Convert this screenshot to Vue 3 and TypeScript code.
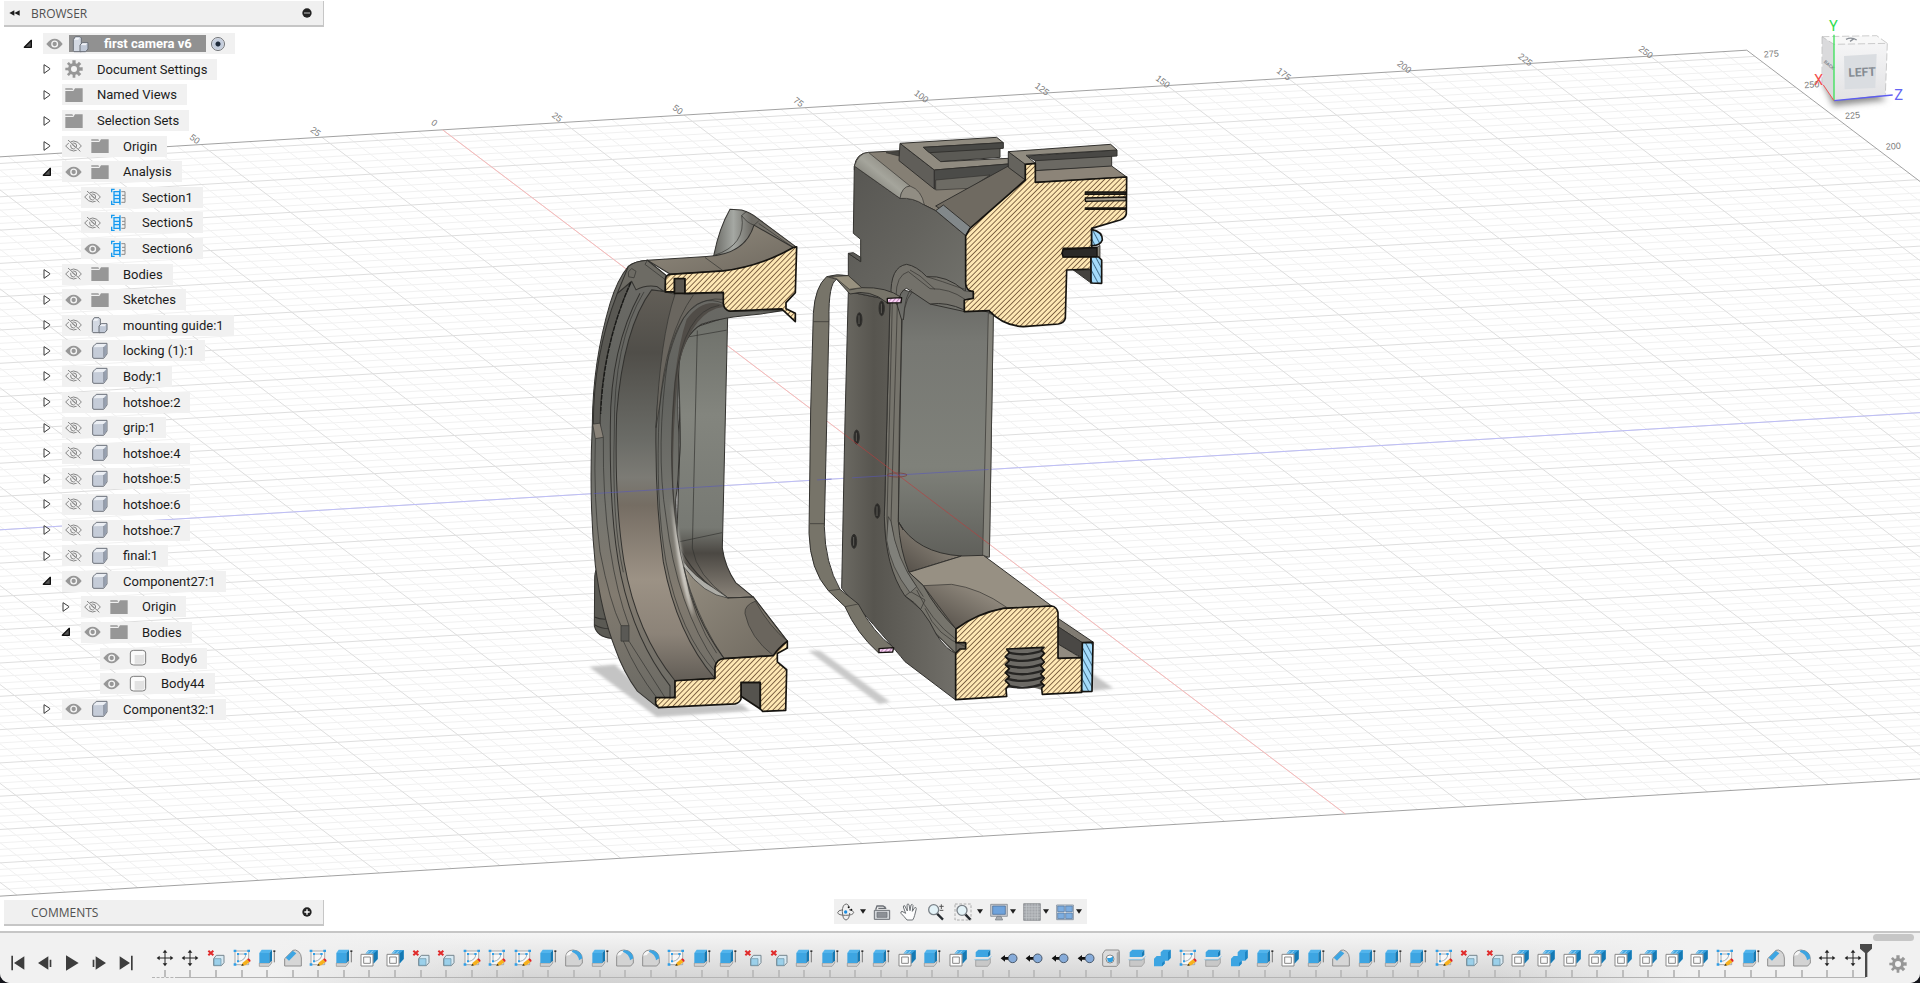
<script setup lang="ts">
import { ref } from 'vue'

type NodeIcon = 'assembly' | 'gear' | 'folder' | 'section' | 'cube' | 'body'

interface TreeNode {
  label: string
  icon: NodeIcon
  level: number
  arrow: 'open' | 'closed' | 'none'
  eye: 'on' | 'off' | 'none'
  root?: boolean
}

const node = (
  label: string,
  icon: NodeIcon,
  level: number,
  arrow: TreeNode['arrow'],
  eye: TreeNode['eye'],
  root = false
): TreeNode => ({ label, icon, level, arrow, eye, root })

const nodes = ref<TreeNode[]>([
  node('first camera v6', 'assembly', 0, 'open', 'on', true),
  node('Document Settings', 'gear', 1, 'closed', 'none'),
  node('Named Views', 'folder', 1, 'closed', 'none'),
  node('Selection Sets', 'folder', 1, 'closed', 'none'),
  node('Origin', 'folder', 1, 'closed', 'off'),
  node('Analysis', 'folder', 1, 'open', 'on'),
  node('Section1', 'section', 2, 'none', 'off'),
  node('Section5', 'section', 2, 'none', 'off'),
  node('Section6', 'section', 2, 'none', 'on'),
  node('Bodies', 'folder', 1, 'closed', 'off'),
  node('Sketches', 'folder', 1, 'closed', 'on'),
  node('mounting guide:1', 'assembly', 1, 'closed', 'off'),
  node('locking (1):1', 'cube', 1, 'closed', 'on'),
  node('Body:1', 'cube', 1, 'closed', 'off'),
  node('hotshoe:2', 'cube', 1, 'closed', 'off'),
  node('grip:1', 'cube', 1, 'closed', 'off'),
  node('hotshoe:4', 'cube', 1, 'closed', 'off'),
  node('hotshoe:5', 'cube', 1, 'closed', 'off'),
  node('hotshoe:6', 'cube', 1, 'closed', 'off'),
  node('hotshoe:7', 'cube', 1, 'closed', 'off'),
  node('final:1', 'cube', 1, 'closed', 'off'),
  node('Component27:1', 'cube', 1, 'open', 'on'),
  node('Origin', 'folder', 2, 'closed', 'off'),
  node('Bodies', 'folder', 2, 'open', 'on'),
  node('Body6', 'body', 3, 'none', 'on'),
  node('Body44', 'body', 3, 'none', 'on'),
  node('Component32:1', 'cube', 1, 'closed', 'on')
])

const toggleEye = (n: TreeNode): void => {
  n.eye = n.eye === 'on' ? 'off' : 'on'
}

const features: string[] = (
  'move move del sketch ext chamfer sketch ext shell shell del del sketch sketch sketch ext fillet ext ' +
  'fillet fillet sketch ext ext del del ext ext ext ext shell ext shell split press press press press hole ' +
  'split combine sketch split combine ext shell ext chamfer ext ext ext sketch del del shell shell shell ' +
  'shell shell shell shell shell sketch ext chamfer fillet move move'
).split(' ')

const transport = [
  { id: 'first', label: 'Go to beginning' },
  { id: 'prev', label: 'Step back' },
  { id: 'play', label: 'Play' },
  { id: 'next', label: 'Step forward' },
  { id: 'last', label: 'Go to end' }
]

const tools = [
  { id: 'orbit', label: 'Orbit', menu: true, kind: 'loose' },
  { id: 'lookat', label: 'Look at', menu: false, kind: 'single' },
  { id: 'pan', label: 'Pan', menu: false, kind: 'single' },
  { id: 'zoom', label: 'Zoom', menu: false, kind: 'single' },
  { id: 'zoomwin', label: 'Zoom window', menu: true, kind: 'loose' },
  { id: 'display', label: 'Display settings', menu: true, kind: 'tight' },
  { id: 'gridset', label: 'Grid and snaps', menu: true, kind: 'tight' },
  { id: 'viewports', label: 'Viewports', menu: true, kind: 'tight' }
]

/* Ground plane: x runs along the red axis, z along the blue one, one unit is 25 mm. */
const project = (x: number, z: number): [number, number] => [
  Math.round((898 + 40.66 * x + 120.76 * z) * 10) / 10,
  Math.round((475 + 30.82 * x - 7.37 * z) * 10) / 10
]
const segment = (x1: number, z1: number, x2: number, z2: number): string => {
  const a = project(x1, z1)
  const b = project(x2, z2)
  return `M${a[0]} ${a[1]}L${b[0]} ${b[1]}`
}
const X0 = -11.2
const X1 = 11
const Z0 = -15
const Z1 = 10.8

let minor = ''
let major = ''
for (let i = -55; i <= 54; i++) {
  const d = segment(i / 5, Z0, i / 5, Z1)
  if (i % 5 === 0) major += d
  else minor += d
}
for (let i = -75; i <= 53; i++) {
  const d = segment(X0, i / 5, X1, i / 5)
  if (i % 5 === 0) major += d
  else minor += d
}
const border = segment(X0, Z0, X0, Z1) + segment(X1, Z0, X1, Z1) + segment(X0, Z1, X1, Z1)
const axisX = segment(X0, 0, X1, 0)
const axisZ = segment(0, Z0, 0, Z1)
const overRing = segment(0, -2.52, 0, -1.45)
const overBand = segment(0, -0.67, 0, -0.55)
const overBody = segment(0, -0.38, 0, 0.75)
const overBodyX = segment(-1.3, 0, 2.25, 0)

const topLabels = Array.from({ length: 13 }, (_, i) => i - 2).map((z) => {
  const p = project(X0 - 0.1, z)
  return { text: String(Math.abs(z * 25)), t: `translate(${p[0] - 8} ${p[1] - 3}) rotate(37)` }
})
const sideLabels = [275, 250, 225, 200].map((v) => {
  const p = project(-v / 25, Z1)
  return { text: String(v), t: `translate(${p[0] + 9} ${p[1] + 1}) rotate(-4)` }
})
const threads = [0, 1, 2, 3, 4, 5]
</script>

<template>
  <div class="app">
    <svg class="defs" aria-hidden="true">
      <defs>
        <symbol id="i-eye-on" viewBox="0 0 51 36">
          <path d="M1 18Q13 2 26 2T50 18Q38 34 26 34T1 18Z" fill="#979797" />
          <circle cx="26" cy="18" r="8.500" fill="#979797" stroke="#f4f4f4" stroke-width="4" />
        </symbol>
        <symbol id="i-eye-off" viewBox="0 0 51 36">
          <path d="M2 18Q13 3 26 3T49 18Q38 33 26 33T2 18Z" fill="none" stroke="#858585" stroke-width="3" />
          <circle cx="26" cy="18" r="9" fill="none" stroke="#858585" stroke-width="3" />
          <path d="M8 1L44 34" stroke="#f1f1f1" stroke-width="7" />
          <path d="M9 0L46 34M20 12L32 23" stroke="#858585" stroke-width="3" />
        </symbol>
        <symbol id="i-folder" viewBox="0 0 54 54">
          <path d="M1 7H22L25 11H1Z" fill="#979797" />
          <path d="M1 15H25L30 7H53V48H1Z" fill="#979797" />
        </symbol>
        <symbol id="i-gear" viewBox="0 0 54 54">
          <g fill="#979797">
            <path v-for="a in [0, 45, 90, 135]" :key="a" d="M22 1H32L31 53H23Z" :transform="`rotate(${a} 27 27)`" />
            <circle cx="27" cy="27" r="18" />
          </g>
          <circle cx="27" cy="27" r="9" fill="#f4f4f4" />
        </symbol>
        <symbol id="i-cube" viewBox="0 0 54 54">
          <path d="M5 18Q5 13 9 11L16 4H48V36L38 49H9Q5 49 5 45Z" fill="#c5ccd8" stroke="#70757d" stroke-width="3" stroke-linejoin="round" />
          <path d="M7 16L17 6H46L37 15Z" fill="#eceff4" />
          <path d="M38 16L47 7V36L38 46Z" fill="#98a1b0" />
          <path d="M38 15V46" stroke="#7d8490" stroke-width="2" />
        </symbol>
        <symbol id="i-assembly" viewBox="0 0 54 54">
          <path d="M4 14L10 5H24L28 9V50H6L4 47Z" fill="#d3d9e3" stroke="#6b7078" stroke-width="3" stroke-linejoin="round" />
          <path d="M24 30L31 23H48V42L41 50H24Z" fill="#c0c8d6" stroke="#6b7078" stroke-width="3" stroke-linejoin="round" />
          <path d="M26 30L32 25H46L41 31Z" fill="#f0f2f6" />
          <path d="M7 14L11 8H22L19 14Z" fill="#f3f5f9" />
        </symbol>
        <symbol id="i-body" viewBox="0 0 54 54">
          <path d="M4 12Q4 4 14 4H40Q50 4 50 12V40Q50 48 40 48H14Q4 48 4 40Z" fill="#fbfbfb" stroke="#7c7c7c" stroke-width="3" />
          <path d="M17 18H40Q46 18 46 13V40Q46 44 40 44H17Z" fill="#e2e2e2" />
        </symbol>
        <symbol id="i-section" viewBox="0 0 54 54">
          <path d="M14 4H5V13M5 38V49H14" fill="none" stroke="#169af0" stroke-width="4" />
          <path d="M12 11H29V43H12ZM12 22H29M12 32H29M30 4V50" fill="#d4ecfc" stroke="#169af0" stroke-width="4" />
          <path d="M34 11H45V22H36M45 22V32H36M45 32V43H34" fill="none" stroke="#8a8a8a" stroke-width="3" />
        </symbol>

        <symbol id="f-move" viewBox="0 0 54 54">
          <path d="M27 8V46M8 27H46" stroke="#222" stroke-width="3" />
          <path d="M27 2L34 11H20ZM27 52L34 43H20ZM2 27L11 20V34ZM52 27L43 20V34Z" fill="#222" />
        </symbol>
        <symbol id="f-ext" viewBox="0 0 54 54">
          <path d="M4 42H33L41 34V42L33 52H4Z" fill="#d2d2d2" stroke="#8d8d8d" stroke-width="2" />
          <path d="M4 12L11 2H42L34 12Z" fill="#52b4ec" />
          <path d="M4 12H34V42H4Z" fill="#3da5e2" />
          <path d="M34 12L42 2V34L34 42Z" fill="#1579b3" />
          <path d="M49 7V40" stroke="#444" stroke-width="2" />
          <path d="M46 4H52V9H46Z" fill="#333" />
        </symbol>
        <symbol id="f-sketch" viewBox="0 0 54 54">
          <path d="M6 6H47V47H6Z" fill="#f7f7f7" stroke="#8a8a8a" stroke-width="2" />
          <path d="M15 38V15H38M38 15Q39 33 15 38" fill="none" stroke="#7c8994" stroke-width="2" />
          <path d="M2 2H10V9H2ZM43 2H51V9H43ZM2 43H10V50H2ZM12 12H18V18H12ZM34 12H41V18H34ZM12 34H18V40H12Z" fill="#2f9fe8" />
          <path d="M25 51L29 41L42 31L50 39L37 49Z" fill="#f7b11d" />
          <path d="M42 31L46 28Q53 31 53 36L50 39Z" fill="#e32424" />
          <path d="M25 51L28 44L33 49Z" fill="#333" />
        </symbol>
        <symbol id="f-chamfer" viewBox="0 0 54 54">
          <path d="M2 29L27 4Q34 0 44 8Q52 16 52 27V51H2Z" fill="#d6d6d6" stroke="#8f8f8f" stroke-width="3" />
          <path d="M5 26L26 5L37 13L15 35Z" fill="#3da5e2" />
        </symbol>
        <symbol id="f-fillet" viewBox="0 0 54 54">
          <path d="M2 51V23Q4 4 24 3Q52 5 52 32V42L44 51Z" fill="#d3d3d3" stroke="#8f8f8f" stroke-width="3" />
          <path d="M3 20Q8 5 24 5L34 9Q18 8 15 18Z" fill="#f6f6f6" />
          <path d="M24 3Q50 5 52 28L42 34Q40 15 20 8Z" fill="#3da5e2" />
        </symbol>
        <symbol id="f-shell" viewBox="0 0 54 54">
          <path d="M16 14L26 3H53V30L40 44V14Z" fill="#3da5e2" />
          <path d="M40 14L53 3V30L40 44Z" fill="#1579b3" />
          <path d="M20 14L29 5M30 14L39 5" stroke="#e9f5fc" stroke-width="2" />
          <path d="M3 16H39V51H3Z" fill="#fff" stroke="#898989" stroke-width="3" />
          <path d="M11 24H31V43H11Z" fill="#fafafa" stroke="#898989" stroke-width="3" />
        </symbol>
        <symbol id="f-del" viewBox="0 0 54 54">
          <path d="M4 5L19 19M19 5L4 19" stroke="#e02a2a" stroke-width="6" />
          <path d="M20 29L28 19H51V41L43 50H20Z" fill="#d7eaf4" stroke="#77868f" stroke-width="3" stroke-linejoin="round" />
          <path d="M21 29H42V49H21Z" fill="#9bd0ea" stroke="#6b8fa2" stroke-width="2" />
        </symbol>
        <symbol id="f-split" viewBox="0 0 54 54">
          <path d="M5 33H42L49 28V42L41 52H5Z" fill="#c8c8c8" stroke="#939393" stroke-width="2" />
          <path d="M5 10L13 2H49L42 10V24H5Z" fill="#3da5e2" />
          <path d="M42 10L49 2V18L42 24Z" fill="#1579b3" />
          <path d="M1 32H42L53 22" fill="none" stroke="#6fc1f0" stroke-width="2" />
        </symbol>
        <symbol id="f-combine" viewBox="0 0 54 54">
          <path d="M3 29L11 21H23V10L31 2H53V27L45 35H35V44L27 52H3Z" fill="#3da5e2" />
          <path d="M45 10L53 2V27L45 35ZM35 35V44L27 52V42Z" fill="#1f86c4" />
        </symbol>
        <symbol id="f-press" viewBox="0 0 54 54">
          <path d="M2 28L15 18V24H26V32H15V38Z" fill="#111" />
          <circle cx="38" cy="28" r="13" fill="#86abd9" stroke="#4c5a6b" stroke-width="3" />
        </symbol>
        <symbol id="f-hole" viewBox="0 0 54 54">
          <path d="M2 14L10 3H48Q52 3 52 7V42L44 52H6Q2 52 2 48Z" fill="#dcdcdc" stroke="#8f8f8f" stroke-width="3" />
          <path d="M44 12L51 6V42L44 49Z" fill="#a9a9a9" />
          <circle cx="24" cy="30" r="12" fill="#fff" stroke="#8a8a8a" stroke-width="3" />
          <path d="M15 26Q30 30 31 21Q37 28 33 35Q26 43 17 37Z" fill="#2f9fe0" />
        </symbol>

        <symbol id="t-first" viewBox="0 0 48 48"><path d="M4 2H9V46H4ZM43 4V44L12 24Z" fill="#3d3d3d" /></symbol>
        <symbol id="t-prev" viewBox="0 0 48 48"><path d="M34 4V44L3 24ZM38 14H43V36H38Z" fill="#3d3d3d" /></symbol>
        <symbol id="t-play" viewBox="0 0 48 48"><path d="M6 1L44 24L6 47Z" fill="#3d3d3d" /></symbol>
        <symbol id="t-next" viewBox="0 0 48 48"><path d="M14 4V44L45 24ZM5 14H10V36H5Z" fill="#3d3d3d" /></symbol>
        <symbol id="t-last" viewBox="0 0 48 48"><path d="M39 2H44V46H39ZM5 4V44L36 24Z" fill="#3d3d3d" /></symbol>

        <symbol id="n-orbit" viewBox="0 0 54 54">
          <path d="M18 20Q2 22 2 29Q4 37 26 37Q49 37 50 28Q49 22 36 20" fill="none" stroke="#6f6f6f" stroke-width="3" />
          <path d="M28 3Q16 4 16 26Q17 50 27 51Q37 49 38 30M28 3Q33 3 36 11" fill="none" stroke="#6f6f6f" stroke-width="3" />
          <circle cx="26" cy="27" r="5" fill="#1b8de0" />
          <circle cx="35" cy="13" r="3" fill="#111" /><circle cx="43" cy="20" r="3" fill="#111" />
        </symbol>
        <symbol id="n-lookat" viewBox="0 0 54 54">
          <path d="M4 22H50V49H4Z" fill="#d3d6da" stroke="#6b6f75" stroke-width="3" />
          <path d="M12 28H42V43H12Z" fill="#8c9096" stroke="#6b6f75" stroke-width="2" />
          <path d="M8 20L12 9H30L38 14M16 16H40" fill="none" stroke="#6b6f75" stroke-width="4" />
        </symbol>
        <symbol id="n-pan" viewBox="0 0 54 54">
          <path d="M21 51Q13 41 3 31Q1 26 6 25L17 31L10 12Q10 7 14 8L22 24L21 5Q24 0 27 5L30 23L33 6Q37 2 39 7L37 25L44 14Q49 12 49 17L44 37Q42 45 38 51Z" fill="#fdfdfd" stroke="#6e7276" stroke-width="3" stroke-linejoin="round" />
        </symbol>
        <symbol id="n-zoom" viewBox="0 0 54 54">
          <path d="M30 32L48 50" stroke="#262b30" stroke-width="7" />
          <circle cx="20" cy="20" r="15" fill="#e4f3f8" stroke="#7b8288" stroke-width="4" />
          <path d="M43 4V18M37 10H50M38 22H49" stroke="#555" stroke-width="3" />
        </symbol>
        <symbol id="n-zoomwin" viewBox="0 0 54 54">
          <path d="M3 3H51V51H3Z" fill="none" stroke="#888" stroke-width="2" stroke-dasharray="8 5" />
          <path d="M34 34L49 50" stroke="#262b30" stroke-width="7" />
          <circle cx="24" cy="22" r="15" fill="#e4f3f8" stroke="#7b8288" stroke-width="4" />
        </symbol>
        <symbol id="n-display" viewBox="0 0 54 54">
          <path d="M2 4H52V40H2Z" fill="#c9cdd2" stroke="#737980" stroke-width="2" />
          <path d="M8 9H46V34H8Z" fill="#6fa3dc" stroke="#45678f" stroke-width="2" />
          <path d="M21 40H33L38 51H16Z" fill="#a9adb2" stroke="#737980" stroke-width="2" />
        </symbol>
        <symbol id="n-gridset" viewBox="0 0 54 54">
          <path d="M2 2H52V52H2Z" fill="#a3a6aa" stroke="#75787c" stroke-width="2" />
          <path d="M10 2V52M18 2V52M27 2V52M36 2V52M44 2V52M2 10H52M2 18H52M2 27H52M2 36H52M2 44H52" stroke="#c6c8cb" stroke-width="2" />
        </symbol>
        <symbol id="n-viewports" viewBox="0 0 54 54">
          <path d="M2 6H52V50H2Z" fill="#eee" stroke="#5d6f85" stroke-width="2" />
          <path d="M5 9H25V26H5ZM29 9H49V26H29ZM5 30H25V47H5ZM29 30H49V47H29Z" fill="#7dade0" stroke="#4b7099" stroke-width="2" />
        </symbol>
      </defs>
    </svg>

    <main class="workspace">
      <svg class="scene" viewBox="0 0 1920 931" preserveAspectRatio="xMidYMid slice" role="img" aria-label="Section view of the camera model">
        <defs>
          <pattern id="hatch" width="11" height="11" patternUnits="userSpaceOnUse" patternTransform="rotate(45)">
            <rect width="11" height="11" fill="#fee8b4" /><path d="M1 0V11" stroke="#6f5236" stroke-width="3" />
          </pattern>
          <pattern id="hatchBlue" width="15" height="15" patternUnits="userSpaceOnUse" patternTransform="rotate(-28)">
            <rect width="15" height="15" fill="#a4dbfb" /><path d="M1 0V15" stroke="#2f5b78" stroke-width="3" />
          </pattern>
          <pattern id="hatchPink" width="9" height="9" patternUnits="userSpaceOnUse" patternTransform="rotate(40)">
            <rect width="9" height="9" fill="#fbd3f6" /><path d="M1 0V9" stroke="#8a4b84" stroke-width="2" />
          </pattern>
          <linearGradient id="wall" x1="0" y1="0" x2="0" y2="1">
            <stop offset="0" stop-color="#625e57" /><stop offset=".16" stop-color="#504e49" />
            <stop offset=".38" stop-color="#6a6b66" /><stop offset=".48" stop-color="#7c7b75" />
            <stop offset=".55" stop-color="#756d63" /><stop offset=".74" stop-color="#9c9285" />
            <stop offset=".88" stop-color="#8c8378" /><stop offset="1" stop-color="#625d56" />
          </linearGradient>
          <linearGradient id="rim" x1="0" y1="0" x2="0" y2="1">
            <stop offset="0" stop-color="#6c6b66" /><stop offset=".3" stop-color="#62635f" />
            <stop offset=".55" stop-color="#75756f" /><stop offset=".75" stop-color="#827b70" /><stop offset="1" stop-color="#6a6963" />
          </linearGradient>
          <linearGradient id="pane" x1="0" y1="0" x2="0" y2="1">
            <stop offset="0" stop-color="#6e706a" /><stop offset=".35" stop-color="#83857e" />
            <stop offset=".75" stop-color="#777973" /><stop offset=".84" stop-color="#4b4843" /><stop offset="1" stop-color="#8a8379" />
          </linearGradient>
          <linearGradient id="horn" x1="0" y1="0" x2="1" y2="0">
            <stop offset="0" stop-color="#55544f" /><stop offset=".3" stop-color="#a5a8a3" />
            <stop offset=".5" stop-color="#6e6c66" /><stop offset="1" stop-color="#827c72" />
          </linearGradient>
          <linearGradient id="tan" x1="0" y1="0" x2="1" y2="1">
            <stop offset="0" stop-color="#948d80" /><stop offset="1" stop-color="#6f695f" />
          </linearGradient>
          <linearGradient id="scoop" x1="0" y1="1" x2="1" y2="0">
            <stop offset="0" stop-color="#4c4741" /><stop offset="1" stop-color="#a39b8e" />
          </linearGradient>
          <linearGradient id="plate" x1="0" y1="0" x2="1" y2="0">
            <stop offset="0" stop-color="#6c6a63" /><stop offset=".28" stop-color="#57554f" /><stop offset="1" stop-color="#716f69" />
          </linearGradient>
          <linearGradient id="side" x1="0" y1="0" x2="1" y2="1">
            <stop offset="0" stop-color="#575652" /><stop offset=".5" stop-color="#64635e" /><stop offset="1" stop-color="#73736d" />
          </linearGradient>
          <linearGradient id="inner" x1="0" y1="0" x2="0" y2="1">
            <stop offset="0" stop-color="#666662" /><stop offset=".2" stop-color="#777873" />
            <stop offset=".65" stop-color="#7f817a" /><stop offset="1" stop-color="#5d5d58" />
          </linearGradient>
          <linearGradient id="edge" x1="0" y1="1" x2="1" y2="0">
            <stop offset="0" stop-color="#57554f" /><stop offset=".5" stop-color="#a5a59c" /><stop offset="1" stop-color="#716c63" />
          </linearGradient>
          <filter id="soft" x="-20%" y="-20%" width="140%" height="140%"><feGaussianBlur stdDeviation="4" /></filter>
        </defs>

        <rect width="1920" height="931" fill="#fff" />
        <g fill="none">
          <path :d="minor" stroke="#f1f1f1" />
          <path :d="major" stroke="#dedede" />
          <path :d="border" stroke="#a2a2a2" />
          <path :d="axisX" stroke="#f9b9b9" />
          <path :d="axisZ" stroke="#bdbdf7" />
        </g>
        <g class="ticks">
          <text v-for="l in topLabels" :key="'t' + l.t" :transform="l.t">{{ l.text }}</text>
          <text v-for="l in sideLabels" :key="'s' + l.t" :transform="l.t">{{ l.text }}</text>
        </g>

        <!-- lens ring -->
        <svg x="560" y="190" width="270" height="540" viewBox="0 0 810 1568" preserveAspectRatio="none">
          <path d="M88 1385L165 1378L300 1500L545 1493L570 1512L290 1530Z" fill="#c4c4c4" filter="url(#soft)" />
          <path d="M347 960L487 1040Q495 1095 527 1140L580 1182L505 1200L372 1120Z" fill="#57524c" />
          <g stroke="#33322f" stroke-width="3" stroke-linejoin="round">
            <path d="M110 1100Q104 1110 104 1130L103 1265Q110 1298 155 1302L190 1302L140 1090Z" fill="#5b5a54" />
            <path d="M103 1240Q120 1248 145 1246M103 1262Q125 1276 160 1274" fill="none" />
            <path d="M355 500Q370 420 400 400L503 368L487 1040Q495 1095 527 1140L580 1182L505 1185Q400 1130 350 1020L360 740Z" fill="url(#pane)" />
            <path d="M412 408L397 1040Q410 1120 505 1185M388 426L500 407M355 1022L486 995M355 530Q364 700 360 760Q350 860 349 980" fill="none" stroke-width="2" />
            <path d="M462 187Q478 110 510 56L545 58Q572 66 590 80L708 165L660 178Q560 236 440 235Z" fill="url(#horn)" />
            <path d="M262 204L440 193Q555 188 582 102L700 167Q600 228 490 235L330 244Z" fill="url(#tan)" />
            <path d="M545 74Q560 160 462 190M545 74L560 62M545 74Q560 95 582 102L596 90M435 196L490 235M596 97L700 167" fill="none" stroke-width="2" />
            <path
              d="M262 204Q225 206 205 222Q172 260 150 330Q98 500 97 680Q86 900 106 1090Q125 1230 165 1330Q190 1400 232 1455L290 1500L345 1470V1425L465 1418Q465 1362 500 1360L640 1352L682 1310L580 1182L505 1185Q400 1130 372 1080Q345 1000 347 900Q358 830 357 720Q350 600 358 500Q372 420 425 390Q480 370 603 360L672 350L505 352L490 298L314 296L318 248Z"
              fill="url(#rim)"
            />
            <path d="M215 265Q120 460 120 690L100 680Q100 480 172 300Z" fill="#595853" />
            <path d="M262 204Q225 206 205 222L172 300L215 265L228 290Q255 275 290 280L314 296L318 248Z" fill="#6d6b64" />
            <path d="M275 290Q190 400 170 650Q162 900 192 1080Q230 1290 345 1425L465 1418Q350 1290 310 1080Q285 900 288 690Q300 430 385 303L302 293Z" fill="url(#wall)" />
            <path d="M302 293L385 303L490 298L492 330Q420 300 372 370Q320 460 300 620L288 690Q300 430 345 303Z" fill="#6a665f" stroke-width="2" />
            <path d="M490 340Q400 350 358 500Q325 800 350 980Q340 960 334 800Q330 520 380 375Q430 310 492 335Z" fill="#504c47" stroke="none" />
            <path d="M372 1095Q430 1160 505 1185L580 1182L682 1310L640 1352L492 1360Q400 1240 372 1095Z" fill="url(#tan)" />
            <path d="M372 1095Q430 1175 505 1185L460 1155Q400 1120 372 1080Z" fill="#aeada7" stroke-width="2" />
            <path d="M586 1194Q552 1206 555 1230Q570 1300 640 1352L682 1310Q630 1270 586 1194Z" fill="#6a655d" stroke-width="2" />
            <path d="M98 680L120 677L130 718L106 722Z" fill="#8a8379" stroke-width="2" />
            <path d="M183 1265H207V1310H183Z" fill="#5a5955" stroke-width="2" />
          </g>
          <path d="M335 900Q350 1130 400 1240Q380 1120 345 960Z" fill="#d0cdc6" filter="url(#soft)" />
          <g fill="none" stroke="#33322f" stroke-width="3">
            <path d="M240 300Q150 460 151 690Q148 960 183 1120Q225 1310 330 1440V1474" />
            <path d="M252 296Q160 440 163 700Q155 960 190 1110" stroke-width="2" />
            <path d="M106 722Q100 900 120 1050Q150 1200 183 1265M130 718Q128 900 150 1040Q170 1170 207 1265M207 1310L315 1474M190 1310Q230 1400 290 1474" stroke-width="2" />
            <path d="M400 305Q315 420 298 640Q285 900 318 1080Q360 1290 467 1400M495 318Q370 300 325 480Q285 750 318 950Q350 1210 470 1378" stroke-width="2" />
            <path d="M478 335Q372 350 345 560Q325 780 345 940Q365 1180 492 1360" stroke-width="2" />
            <path d="M372 1095Q400 1250 470 1345M205 238L215 228L228 236L222 255L206 252ZM262 204L255 216L318 262" stroke-width="2" />
            <path d="M212 268Q130 450 122 650" stroke="#191917" stroke-width="4" stroke-dasharray="14 3" />
          </g>
          <g stroke="#15130f" stroke-width="5" stroke-linejoin="round">
            <path d="M543 1430H601V1507L543 1470Z" fill="#55534e" />
            <path d="M343 257H375V300H343Z" fill="#5a564f" />
            <path d="M330 245L490 235Q600 222 700 167L710 165L706 298L678 327V345L706 358V382L665 345L510 352Q492 348 490 330V297L375 300V257H343V296H316V260Q317 248 330 245Z" fill="url(#hatch)" />
            <path d="M345 1425L465 1418V1385Q470 1362 492 1361L640 1352Q655 1330 682 1310V1330L652 1346V1370L680 1393L677 1511L608 1514L601 1507V1430H543V1478Q538 1490 525 1492L295 1503L287 1492V1474H345Z" fill="url(#hatch)" />
          </g>
        </svg>

        <!-- camera body -->
        <svg x="790" y="120" width="350" height="600" viewBox="0 0 1050 1800">
          <path d="M55 1592L90 1592L300 1745L268 1752Z" fill="#c9c9c9" filter="url(#soft)" />
          <path d="M905 1660L970 1705L905 1712Z" fill="#c4c4c4" filter="url(#soft)" />
          <path d="M300 1200L400 1380L498 1520L532 1565V1590L497 1605L340 1440Z" fill="#66625a" />
          <g stroke="#33322f" stroke-width="3" stroke-linejoin="round">
            <path d="M305 500L525 560L610 580L598 1310L515 1330L325 1300Z" fill="url(#inner)" />
            <path d="M595 580L610 584L598 1312L578 1306Z" fill="#85847c" stroke-width="2" />
            <path d="M340 1230L325 1205Q380 1300 515 1308L355 1357Q310 1290 305 1205L325 1205Z" fill="url(#scoop)" />
            <path d="M357 1357L515 1308L580 1306L785 1458L640 1465Q560 1480 498 1527L400 1397Z" fill="#979083" />
            <path d="M400 1397L485 1393Q570 1405 650 1462Q560 1480 498 1527Q440 1450 400 1397Z" fill="url(#scoop)" stroke-width="2" />
            <path d="M305 500L335 600L325 1205Q330 1290 357 1357L400 1397Q440 1470 498 1527V1600L345 1450Q280 1330 283 1190L300 540Z" fill="#76746c" />
            <path d="M175 515L300 540L283 1190Q285 1340 345 1428Q400 1460 440 1545Q470 1590 497 1600V1740L345 1625Q300 1570 155 1405L165 900Z" fill="url(#plate)" />
            <path d="M307 545L291 1195Q300 1340 362 1415M322 555L303 1205Q315 1310 360 1370L400 1430M337 596Q325 900 325 1205M340 600Q345 520 380 510M345 1428L362 1415L405 1440L392 1468L345 1428M405 1465Q440 1550 527 1580M380 1410Q420 1500 500 1560" fill="none" stroke-width="2" />
            <path d="M295 1190L303 1205Q320 1320 380 1400L360 1418Q300 1340 290 1260Z" fill="#80807a" stroke-width="2" />

            <path d="M804 1495L909 1566L877 1568L804 1520Z" fill="#807b72" />
            <path d="M804 1520L877 1568L875 1612L804 1572Z" fill="#4a4845" />
            <path d="M804 1572L872 1613L804 1615Z" fill="#918b80" />

            <path d="M193 140Q198 100 235 97L330 92L433 150L655 132L706 180L540 325L437 272L193 150Z" fill="#857f74" />
            <path d="M193 138L330 235Q370 232 403 255L437 272L527 347V515L525 575L420 552L350 470Q315 460 300 540L175 515V400L212 425V358L190 340Z" fill="url(#side)" />
            <path d="M175 400L190 398L212 412V425Z" fill="#5c5b57" />
            <path d="M193 138Q205 100 235 97L360 198Q335 205 330 235Z" fill="url(#edge)" stroke-width="2" />
            <path d="M330 235Q335 200 360 198Q395 210 403 255Q370 232 330 235Z" fill="#918d83" stroke-width="2" />
            <path d="M330 70L433 150V207L327 122Z" fill="#605e59" />
            <path d="M400 82L630 66V112L450 125Z" fill="#5b5a55" />
            <path d="M330 70L620 52L640 68L400 82L452 125L655 115V132L433 150Z" fill="#908b80" />
            <path d="M400 82L640 68V85L418 98Z" fill="#484845" />
            <path d="M433 150L655 132V142L560 192L433 207Z" fill="#4b4b48" />
            <path d="M437 180L600 165L540 205L437 210Z" fill="#6d6b64" stroke-width="2" />
            <path d="M288 98L327 94V108Z" fill="#474642" stroke-width="2" />
            <path d="M437 258L655 138L706 180L540 325Z" fill="#6f6a61" />
            <path d="M437 272L460 255L542 322L527 347Z" fill="#82888a" />
            <path d="M655 95L706 132V180L655 142Z" fill="#65635d" />
            <path d="M736 115L965 108V140L736 152Z" fill="#6b6963" />
            <path d="M710 108L981 90V108L736 122Z" fill="#494845" />
            <path d="M655 95L962 73L981 90L708 106L736 130L706 133Z" fill="#908b80" />
            <path d="M736 152L965 138L1010 171L736 187Z" fill="#8c8478" />

            <path d="M303 530Q300 440 350 433Q380 438 410 470Q470 465 523 512L550 515V535L523 540V570Q470 545 420 552L350 505Q330 510 322 555Z" fill="#73716a" />
            <path d="M318 530Q318 465 355 455L420 506Q480 505 525 538M340 600Q345 520 365 508M360 450L390 468L435 508M410 470Q460 485 500 500L540 512" fill="none" stroke-width="2" />
            <path d="M850 450H903V489Z" fill="#45433f" />
            <g fill="#2a2927">
              <ellipse cx="208" cy="599" rx="8" ry="21" /><ellipse cx="275" cy="565" rx="8" ry="22" />
              <ellipse cx="200" cy="951" rx="8" ry="21" /><ellipse cx="262" cy="1173" rx="8" ry="22" />
              <ellipse cx="192" cy="1264" rx="8" ry="21" />
            </g>
            <g fill="none" stroke="#7a7871" stroke-width="2">
              <path d="M207 586V612M274 551V580M199 938V964M261 1159V1188M191 1251V1277" />
            </g>

            <path
              d="M335 533Q290 500 215 503L175 467Q140 460 110 470Q75 500 70 580L62 870L57 1240Q60 1350 115 1412L165 1460Q200 1540 265 1598L311 1583Q250 1540 205 1452L150 1408Q105 1330 103 1220L111 870L117 600Q115 490 140 478L180 522Q240 505 292 549Z"
              fill="#777469"
            />
            <path d="M70 605H117M60 1211H103M110 470L140 478M175 467L140 470M215 503L178 510M115 1412L150 1408M165 1460L205 1452" fill="none" stroke-width="2" />
            <path d="M118 470L175 467L215 503L178 508L140 476Z" fill="#98917f" stroke-width="2" />
          </g>

          <path d="M650 1583L762 1580V1712Q700 1690 650 1705Z" fill="#6c6a65" />
          <g fill="none">
            <path v-for="t in threads" :key="t" :d="`M650 ${1596 + t * 20}Q705 ${1612 + t * 20} 762 ${1590 + t * 20}`" stroke="#262523" stroke-width="7" />
          </g>
          <g stroke="#15130f" stroke-width="5" stroke-linejoin="round">
            <path d="M706 133L736 130V187L1010 171L1009 280Q1008 293 990 300L905 325V385H820V410H903V447L830 450L826 595Q822 610 805 612L700 620Q640 618 597 572L523 575V540L550 535V515L538 512Q528 505 527 490V348L540 325L706 180Z" fill="url(#hatch)" />
            <path
              d="M498 1527Q560 1480 640 1465L785 1458Q800 1460 804 1478V1615L875 1613V1717L757 1723L755 1704L763 1696L752 1686L763 1674L752 1662L763 1650L752 1638L763 1626L752 1612L763 1600L754 1590L762 1582L650 1587L658 1598L646 1610L658 1622L646 1634L658 1646L646 1658L658 1670L646 1682L658 1694L648 1706L650 1729L497 1739V1600L510 1587H527V1568H498Z"
              fill="url(#hatch)"
            />
            <path d="M877 1568L909 1567L906 1714L875 1715Z" fill="url(#hatchBlue)" />
            <path d="M905 328Q938 335 937 360Q930 378 905 377Z" fill="url(#hatchBlue)" />
            <path d="M903 410H925L935 420V490L903 489Z" fill="url(#hatchBlue)" />
            <path d="M292 535L335 533L333 548L292 549Z" fill="url(#hatchPink)" stroke-width="4" />
            <path d="M267 1586L311 1583L308 1596L267 1598Z" fill="url(#hatchPink)" stroke-width="4" />
            <path d="M820 388L922 382V410L820 411L816 400Z" fill="#2b2a28" />
            <path d="M922 382L930 376V412L922 408Z" fill="#8d897f" stroke-width="2" />
            <path d="M886 216H1008V223H886ZM886 264H1008V268H886Z" fill="#2e2c28" stroke-width="4" />
            <path d="M886 234L1008 231V242L886 244Z" fill="#a49b8b" stroke-width="4" />
          </g>
        </svg>

        <g fill="none">
          <path :d="overRing + overBand + overBody" stroke="#5656c0" stroke-opacity=".55" />
          <path :d="overBodyX" stroke="#c03a3a" stroke-opacity=".6" />
          <ellipse cx="897" cy="475" rx="10" ry="2" stroke="#7a3a3a" stroke-opacity=".7" />
        </g>
      </svg>

      <svg class="viewcube" viewBox="0 0 660 540" role="img" aria-label="View cube">
        <defs>
          <linearGradient id="cubeFace" x1="0" y1="0" x2="0" y2="1">
            <stop offset="0" stop-color="#f5f5f6" /><stop offset="1" stop-color="#e2e2e4" />
          </linearGradient>
          <filter id="cubeSoft" x="-30%" y="-50%" width="160%" height="200%"><feGaussianBlur stdDeviation="9" /></filter>
        </defs>
        <path d="M365 240L400 318L560 300L520 270Z" fill="#8d8d8d" filter="url(#cubeSoft)" />
        <path d="M366 110L530 107L562 130L402 133Z" fill="#f8f8f8" />
        <path d="M366 110L402 133V302L368 250Z" fill="#dadadc" />
        <path d="M402 133L562 130L556 284L402 302Z" fill="url(#cubeFace)" />
        <path d="M432 168L530 162L526 264L434 268Z" fill="#dadde1" />
        <path d="M366 110L530 107L562 130L402 133ZM366 110V250M562 130L556 284" fill="none" stroke="#b4b4b4" stroke-width="2" stroke-dasharray="22 8" />
        <path d="M438 118Q455 110 470 120M450 124L462 116" fill="none" stroke="#8a8f96" stroke-width="4" />
        <text class="face" x="445" y="229" transform="rotate(-2 484 215)">LEFT</text>
        <text class="face back" x="368" y="196" transform="rotate(40 382 195)">BACK</text>
        <path d="M402 302V104" stroke="#3ce25a" stroke-width="4" />
        <path d="M402 302L578 285" stroke="#5c5cf2" stroke-width="4" />
        <path d="M402 302L370 255" stroke="#f25555" stroke-width="3" />
        <text class="axis" x="387" y="94" fill="#2fdc50">Y</text>
        <text class="axis" x="342" y="254" fill="#f24f4f">X</text>
        <text class="axis" x="583" y="299" fill="#6464f4">Z</text>
      </svg>

      <div class="overlay">
        <section class="browser" aria-label="Browser">
          <header class="panel">
            <button class="collapse" type="button" aria-label="Collapse browser">
              <svg viewBox="0 0 33 18"><path d="M1 9L16 1V17ZM16 9L32 1V17Z" fill="#1d1d1d" /></svg>
            </button>
            <h2>BROWSER</h2>
            <button class="round" type="button" aria-label="Minimize browser">
              <svg viewBox="0 0 30 30"><circle cx="15" cy="15" r="14" fill="#222" /><path d="M6 15H24" stroke="#9c9c9c" stroke-width="4" /></svg>
            </button>
          </header>
          <ul class="tree">
            <li v-for="(n, i) in nodes" :key="i" :class="['row', 'level-' + n.level]">
              <button v-if="n.arrow !== 'none'" class="arrow" type="button" :aria-label="(n.arrow === 'open' ? 'Collapse ' : 'Expand ') + n.label">
                <svg v-if="n.arrow === 'open'" viewBox="0 0 30 30"><path d="M25 4V25H4Z" fill="#555" stroke="#111" stroke-width="4" stroke-linejoin="round" /></svg>
                <svg v-else viewBox="0 0 30 30"><path d="M6 2V28L23 16V13Z" fill="#fff" stroke="#3a3a3a" stroke-width="3" stroke-linejoin="round" /></svg>
              </button>
              <span v-else class="arrow"></span>
              <div class="cell">
                <button v-if="n.eye !== 'none'" class="eye" type="button" :aria-label="'Toggle visibility of ' + n.label" @click="toggleEye(n)">
                  <svg><use :href="'#i-eye-' + n.eye" /></svg>
                </button>
                <span :class="['name', { active: n.root }]">
                  <svg class="icon" aria-hidden="true"><use :href="'#i-' + n.icon" /></svg>
                  <span class="label">{{ n.label }}</span>
                </span>
                <input v-if="n.root" class="activate" type="radio" name="active-component" checked :aria-label="'Activate ' + n.label" />
              </div>
            </li>
          </ul>
        </section>

        <div class="bottom">
          <section class="panel comments" aria-label="Comments">
            <h2>COMMENTS</h2>
            <button class="round" type="button" aria-label="Add comment">
              <svg viewBox="0 0 30 30"><circle cx="15" cy="15" r="14" fill="#222" /><path d="M7 15H23M15 7V23" stroke="#fff" stroke-width="4" /></svg>
            </button>
          </section>
          <nav class="navbar" aria-label="Navigation tools">
            <button v-for="t in tools" :key="t.id" :class="t.kind" type="button" :aria-label="t.label">
              <svg class="icon"><use :href="'#n-' + t.id" /></svg>
              <svg v-if="t.menu" class="caret" viewBox="0 0 18 15"><path d="M0 1H18L9 14Z" fill="#1f1f1f" /></svg>
            </button>
          </nav>
        </div>
      </div>
    </main>

    <footer class="timeline">
      <div class="transport">
        <button v-for="t in transport" :key="t.id" type="button" :aria-label="t.label">
          <svg><use :href="'#t-' + t.id" /></svg>
        </button>
      </div>
      <ol class="features">
        <li v-for="(f, i) in features" :key="i">
          <button type="button" :aria-label="f + ' feature'"><svg><use :href="'#f-' + f" /></svg></button>
        </li>
      </ol>
      <div class="end">
        <svg class="marker" viewBox="0 0 36 99" aria-hidden="true"><path d="M0 0H36V14L22 27V99H15V27L0 14Z" fill="#4a4a4a" /></svg>
        <span class="scroll"></span>
        <button class="settings" type="button" aria-label="Timeline settings"><svg><use href="#i-gear" /></svg></button>
      </div>
    </footer>
  </div>
</template>

<style>
body {
  margin: 0;
}
</style>

<style scoped>
.app {
  display: flex;
  flex-direction: column;
  min-height: 100vh;
  background: #15161c;
  font-family: Roboto, 'Open Sans', sans-serif;
  font-size: 13px;
  color: #1c1c1c;
}
.defs {
  position: absolute;
  width: 0;
  height: 0;
}
button {
  display: flex;
  align-items: center;
  padding: 0;
  border: 0;
  background: none;
  cursor: pointer;
}
svg {
  display: block;
}
.workspace {
  position: relative;
  flex: 1;
  display: flex;
  overflow: hidden;
  background: #fff;
}
.scene {
  position: absolute;
  inset: 0;
  width: 100%;
  height: 100%;
}
.scene .ticks {
  font-family: 'Liberation Sans', sans-serif;
  font-size: 9px;
  fill: #7b7b7b;
}
.viewcube {
  position: absolute;
  top: 0;
  right: 0;
  width: 220px;
  height: 180px;
}
.viewcube .face {
  font-size: 36px;
  font-weight: 700;
  fill: #858b92;
}
.viewcube .back {
  font-size: 14px;
}
.viewcube .axis {
  font-size: 44px;
}
.overlay {
  position: relative;
  flex: 1;
  display: flex;
  flex-direction: column;
  justify-content: space-between;
  padding: 1px 4px 5px;
}
.panel {
  display: flex;
  align-items: center;
  box-sizing: border-box;
  width: 320px;
  height: 26px;
  padding: 0 11px 0 5px;
  border-right: 1px solid #c6c6c6;
  border-bottom: 2px solid #c6c6c6;
  background: #f0f0f0;
}
.panel h2 {
  flex: 1;
  margin: 0;
  font-family: 'Open Sans', sans-serif;
  font-size: 12px;
  font-weight: 400;
  color: #505050;
}
.collapse {
  width: 22px;
}
.collapse svg {
  width: 11px;
  height: 6px;
}
.round svg {
  width: 10px;
  height: 10px;
}
.tree {
  display: grid;
  grid-auto-rows: 1fr;
  min-height: 691px;
  margin: 4px 0 0;
  padding: 0;
  list-style: none;
}
.row {
  display: flex;
  align-items: center;
}
.level-0 {
  padding-left: 19px;
}
.level-1 {
  padding-left: 38px;
}
.level-2 {
  padding-left: 57px;
}
.level-3 {
  padding-left: 76px;
}
.arrow {
  width: 20px;
  height: 20px;
}
.arrow svg {
  width: 10px;
  height: 10px;
}
.cell {
  display: flex;
  align-items: center;
  height: 21px;
  padding-right: 10px;
  background: #f1f1f1;
}
.eye {
  width: 26px;
  padding-left: 3px;
}
.eye svg {
  width: 17px;
  height: 12px;
}
.name {
  display: flex;
  align-items: center;
}
.name .icon {
  width: 18px;
  height: 18px;
  margin: 0 14px 0 3px;
}
.label {
  line-height: 21px;
  white-space: nowrap;
}
.active {
  height: 17px;
  padding-right: 14px;
  background: #919191;
  font-weight: 700;
  color: #fff;
}
.active .label {
  line-height: 17px;
}
.activate {
  appearance: none;
  width: 14px;
  height: 14px;
  margin: 0 0 0 5px;
  border: 1px solid #6d7075;
  border-radius: 50%;
  background: radial-gradient(circle, #1e2a3a 0 2px, #c5cedd 3px 5px, #e6eaf2 6px);
}
.bottom {
  display: grid;
  grid-template-columns: 1fr auto 1fr;
  align-items: start;
}
.comments {
  margin-top: 1px;
  padding-left: 27px;
}
.navbar {
  display: flex;
  align-items: center;
  gap: 7px;
  height: 25px;
  padding: 0 5px 0 3px;
  background: #f0f0f0;
}
.navbar .loose {
  gap: 5px;
}
.navbar .tight {
  gap: 2px;
}
.navbar .single {
  margin-right: 2px;
}
.navbar .icon {
  width: 18px;
  height: 18px;
}
.navbar .caret {
  width: 6px;
  height: 5px;
}
.timeline {
  display: flex;
  height: 50px;
  border-top: 2px solid #c6c6c6;
  border-radius: 0 0 10px 10px;
  background:
    linear-gradient(90deg, #f1f1f1 14%, transparent 27%, transparent 78%, #f1f1f1 88%),
    linear-gradient(#f5f5f5, #d2d2d2);
}
.transport {
  display: flex;
  align-items: center;
  gap: 11px;
  box-sizing: border-box;
  width: 152px;
  padding: 10px 0 0 10px;
}
.transport svg {
  width: 16px;
  height: 16px;
}
.features {
  position: relative;
  flex: 1;
  display: flex;
  height: 45px;
  margin: 0;
  padding: 0;
  list-style: none;
}
.features li {
  flex: 1;
  display: flex;
  flex-direction: column;
  align-items: center;
  min-width: 0;
  border-bottom: 1px solid #b4b4b4;
}
.features li:first-child {
  border-bottom-style: dashed;
}
.features li::after {
  content: '';
  width: 2px;
  height: 7px;
  background: #bdbdbd;
}
.features button {
  height: 37px;
  padding-top: 13px;
  box-sizing: border-box;
}
.features svg {
  width: 18px;
  height: 18px;
}
.end {
  position: relative;
  display: flex;
  align-items: center;
  justify-content: center;
  width: 54px;
  padding: 12px 0 0;
  box-sizing: border-box;
}
.marker {
  position: absolute;
  top: 11px;
  left: -6px;
  width: 12px;
  height: 33px;
}
.scroll {
  position: absolute;
  top: 1px;
  right: 6px;
  width: 41px;
  height: 7px;
  border-radius: 4px;
  background: #c6c6c6;
}
.settings {
  margin-left: 9px;
}
.settings svg {
  width: 18px;
  height: 18px;
}
</style>
